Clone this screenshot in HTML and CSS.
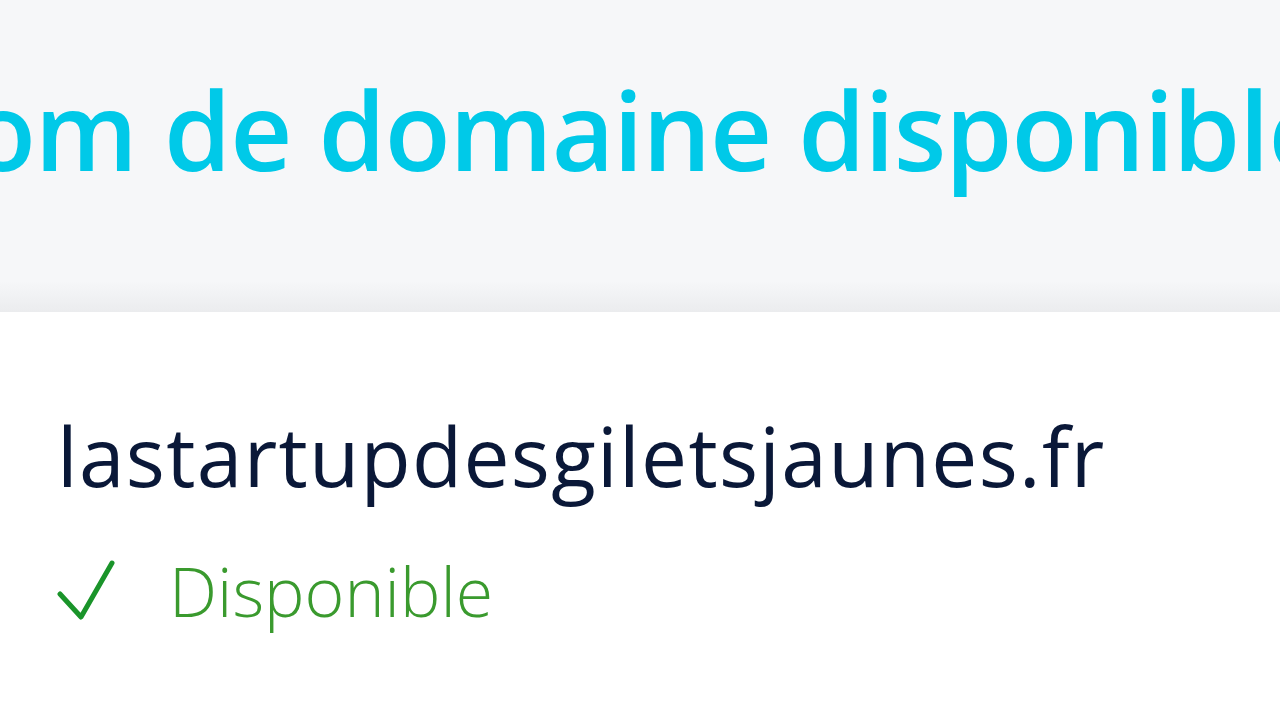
FILE: index.html
```html
<!DOCTYPE html>
<html lang="fr">
<head>
    <meta charset="UTF-8">
    <meta name="viewport" content="width=device-width, initial-scale=1.0">
    <title>Nom de domaine disponible</title>
    <link rel="stylesheet" href="styles.css">
</head>
<body>
    <header class="hero">
        <h1>Nom de domaine disponible</h1>
    </header>
    <main class="result">
        <div class="domain">lastartupdesgiletsjaunes.fr</div>
        <div class="status">
            <svg class="check" viewBox="0 0 60 64" width="60" height="64">
                <path d="M3 35 L24 58 L55 4" fill="none" stroke="#1a942a" stroke-width="5" stroke-linecap="round" stroke-linejoin="round"/>
            </svg>
            <span>Disponible</span>
        </div>
    </main>
</body>
</html>
```

FILE: styles.css
```css
* {
    margin: 0;
    padding: 0;
    box-sizing: border-box;
}
body {
    font-family: 'Open Sans', 'Noto Sans', sans-serif;
    background: #ffffff;
    overflow: hidden;
    height: 100vh;
}
.hero {
    height: 312px;
    background: linear-gradient(to bottom, #f6f7f9 0%, #f6f7f9 90%, #ebecee 100%);
    display: flex;
    justify-content: center;
    align-items: center;
    overflow: hidden;
}
.hero h1 {
    font-size: 108px;
    font-weight: 600;
    letter-spacing: -1px;
    color: #00c9e8;
    white-space: nowrap;
    padding: 0 64px 54px 0;
}
.result {
    padding: 94px 57px 0;
}
.domain {
    font-size: 82px;
    color: #0a1838;
    line-height: 1.2;
    letter-spacing: 1.3px;
}
.status {
    display: flex;
    align-items: center;
    gap: 52px;
    margin-top: 40px;
}
.status span {
    font-size: 68px;
    font-weight: 300;
    color: #3a9a2e;
}
```
